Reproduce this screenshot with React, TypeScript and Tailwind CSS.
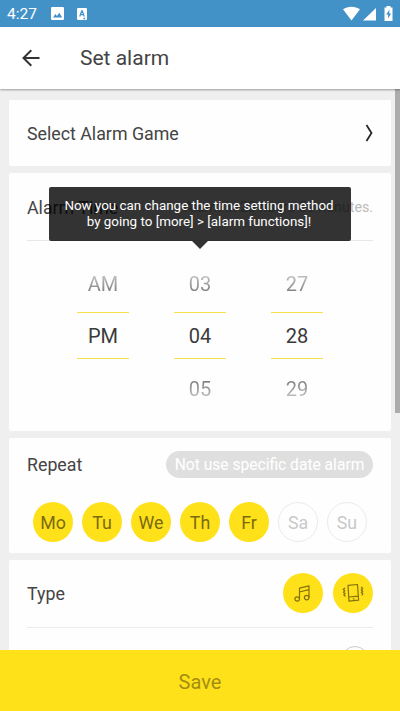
import React, { useState } from "react";

interface DayProps {
  label: string;
  active: boolean;
  onToggle: () => void;
}

const DayButton: React.FC<DayProps> = ({ label, active, onToggle }) => (
  <button
    onClick={onToggle}
    className={`flex h-10 w-10 items-center justify-center rounded-full pt-[2px] text-[17.8px] ${
      active ? "bg-[#ffe11a] text-[#7a6a10]" : "border border-[#ebebeb] text-[#c9c9c9]"
    }`}
  >
    {label}
  </button>
);

interface WheelProps {
  prev: string;
  value: string;
  next: string;
}

const fadeUp = "bg-gradient-to-b from-[#c4c4c4] to-[#7c7c7c] bg-clip-text text-transparent";
const fadeDown = "bg-gradient-to-b from-[#7c7c7c] to-[#c4c4c4] bg-clip-text text-transparent";

const Wheel: React.FC<WheelProps> = ({ prev, value, next }) => (
  <div className="flex w-[52px] flex-col text-center text-[20px] leading-[18px] text-[#3a3a3a]">
    <div className="flex h-[53px] items-center justify-center pb-[3px]">
      <span className={fadeUp}>{prev}</span>
    </div>
    <div className="flex h-[47px] items-center justify-center border-y border-[#f5e04a] pt-px">{value}</div>
    <div className="flex h-[59px] items-center justify-center">
      <span className={fadeDown}>{next}</span>
    </div>
  </div>
);

const StatusBar = () => (
  <div className="flex h-[27px] shrink-0 items-center bg-[#4292c8] pr-[7px] pl-[7px] text-white">
    <span className="w-[44px] pt-[2px] text-[15.5px]">4:27</span>
    <svg width="13" height="13" viewBox="0 0 13 13">
      <rect width="13" height="13" rx="1.3" fill="#fff" />
      <path d="M2 10.5 4.3 7l1.6 2 2.4-3.2 2.9 4.7z" fill="#4292c8" />
    </svg>
    <svg className="ml-[13px]" width="10" height="12" viewBox="0 0 11 12" preserveAspectRatio="none">
      <rect width="11" height="12" rx="1.2" fill="#fff" />
      <path d="M3 8.5 5.2 3h.6L8 8.5M3.8 6.7h3.4M7 10.5h2" fill="none" stroke="#4292c8" strokeWidth="1.3" />
    </svg>
    <svg className="ml-auto" width="50" height="15" viewBox="0 0 50 15" fill="#fff">
      <path d="M0 3.2C4.8-.2 12.2-.2 17 3.2L8.5 14.5z" />
      <path d="M33 2v12.500H20z" />
      <path d="M43.5 0h4v1.500h2V15h-8V1.500h2z" />
      <path d="M46.5 3.500 43.2 8.500h1.900v4l3-5h-1.900z" fill="#4292c8" />
    </svg>
  </div>
);

const MusicIcon = () => (
  <svg width="17" height="18" viewBox="0 0 17 18" fill="none" stroke="#85720b" strokeWidth="1.2" strokeLinejoin="round">
    <path d="M5.500 15V4.200L15 1.800V13.500M5.500 8 15 5.600" />
    <ellipse cx="3.200" cy="15" rx="2.300" ry="2.200" />
    <ellipse cx="12.700" cy="13.600" rx="2.300" ry="2.200" />
  </svg>
);

const VibrateIcon = () => (
  <svg width="22" height="20" viewBox="0 0 22 20" fill="none" stroke="#85720b" strokeWidth="1.2" strokeLinejoin="round" strokeLinecap="round">
    <path d="M6 2.300 15.500 1.500 16.600 17.200 7 18.200zM6.800 14 16.300 13.200M11.300 15.800h.8" />
    <path d="M2.600 5.200 1.200 6.500 2.800 7.800 1.400 9.200 3 10.500 1.800 11.800 3.100 13M19.400 4.200 20.700 5.500 19.200 6.800 20.800 8.200 19.300 9.500 20.900 10.800 20 12" />
  </svg>
);

const App: React.FC = () => {
  const [days, setDays] = useState([
    { label: "Mo", active: true },
    { label: "Tu", active: true },
    { label: "We", active: true },
    { label: "Th", active: true },
    { label: "Fr", active: true },
    { label: "Sa", active: false },
    { label: "Su", active: false },
  ]);

  const toggleDay = (index: number) => {
    setDays(days.map((d, i) => (i === index ? { ...d, active: !d.active } : d)));
  };

  return (
    <div className="relative flex h-[711px] w-[400px] flex-col overflow-hidden bg-[#efefef] font-['Roboto',sans-serif] text-[#444]">
      <StatusBar />

      <header className="z-10 flex h-[62px] shrink-0 items-center bg-white pl-[22px] shadow-[0_1px_2px_rgba(0,0,0,0.35)]">
        <svg width="18" height="18" viewBox="0 0 18 18" fill="none" stroke="#333" strokeWidth="2">
          <path d="M17.500 9H1.800M9.300 1.200 1.500 9l7.800 7.800" />
        </svg>
        <h1 className="ml-10 pt-[2px] text-[21px]">Set alarm</h1>
      </header>

      <main className="flex min-h-0 flex-1 flex-col gap-[7px] overflow-hidden px-[9px] pt-[11px]">
        <section className="flex h-[66px] shrink-0 items-center justify-between rounded-xs bg-[#fefefe] px-[18px]">
          <span className="pt-[2px] text-[17.8px]">Select Alarm Game</span>
          <svg width="8" height="18" viewBox="0 0 8 18" fill="none" stroke="#222" strokeWidth="1.7">
            <path d="M1.500 1 6.500 9 1.500 17" />
          </svg>
        </section>

        <section className="relative h-[258px] shrink-0 rounded-xs bg-[#fefefe] px-[18px]">
          <div className="flex h-[68px] items-center justify-between border-b border-[#e8e8e8] pt-[3px]">
            <span className="text-[17.8px]">Alarm Time</span>
            <span className="text-[14.2px] text-[#bbb]">Alarm in 23 hours 59 minutes.</span>
          </div>
          <div className="flex justify-between px-[50px] pt-[18px]">
            <Wheel prev="AM" value="PM" next="" />
            <Wheel prev="03" value="04" next="05" />
            <Wheel prev="27" value="28" next="29" />
          </div>

          {/* time setting hint */}
          <div className="absolute top-[14px] left-10 flex w-[302px] flex-col items-center">
            <div className="flex h-[54px] w-full items-center justify-center rounded-xs bg-black/80 pr-[2px] pb-px text-center text-[13.4px] leading-4 text-white">
              <p className="whitespace-nowrap">
                Now you can change the time setting method
                <br />
                by going to [more] &gt; [alarm functions]!
              </p>
            </div>
            <svg width="16" height="8" viewBox="0 0 16 8">
              <path d="M0 0h16L8 8z" fill="#333" />
            </svg>
          </div>
        </section>

        <section className="h-[115px] shrink-0 rounded-xs bg-[#fefefe] px-[18px] pt-[13px]">
          <div className="flex h-[27px] items-center justify-between">
            <span className="pt-[2px] text-[17.8px]">Repeat</span>
            <span className="flex h-[27px] w-[207px] items-center justify-center rounded-full bg-[#dfdfdf] pt-[2px] text-[15.6px] whitespace-nowrap text-white">
              Not use specific date alarm
            </span>
          </div>
          <div className="mt-6 flex justify-between px-[6px]">
            {days.map((day, i) => (
              <DayButton key={day.label} label={day.label} active={day.active} onToggle={() => toggleDay(i)} />
            ))}
          </div>
        </section>

        <section className="h-[160px] shrink-0 rounded-xs bg-[#fefefe] px-[18px]">
          <div className="flex h-[68px] items-center border-b border-[#ebebeb] pb-px">
            <span className="mr-auto pt-[3px] text-[17.8px]">Type</span>
            <button className="mr-[10px] flex h-10 w-10 items-center justify-center rounded-full bg-[#ffe11a] pr-px">
              <MusicIcon />
            </button>
            <button className="flex h-10 w-10 items-center justify-center rounded-full bg-[#ffe11a]">
              <VibrateIcon />
            </button>
          </div>
          <div className="flex justify-end pt-[18px] pr-1">
            <span className="h-7 w-7 rounded-full border border-[#ccc]" />
          </div>
        </section>
      </main>

      <div className="absolute top-[89px] right-0 h-[324px] w-[5px] bg-[#acacac]" />

      <button className="z-10 h-[61px] shrink-0 bg-[#ffe11a] pt-[2px] text-[20px] text-[#a38d10]">Save</button>
    </div>
  );
};

export default App;
